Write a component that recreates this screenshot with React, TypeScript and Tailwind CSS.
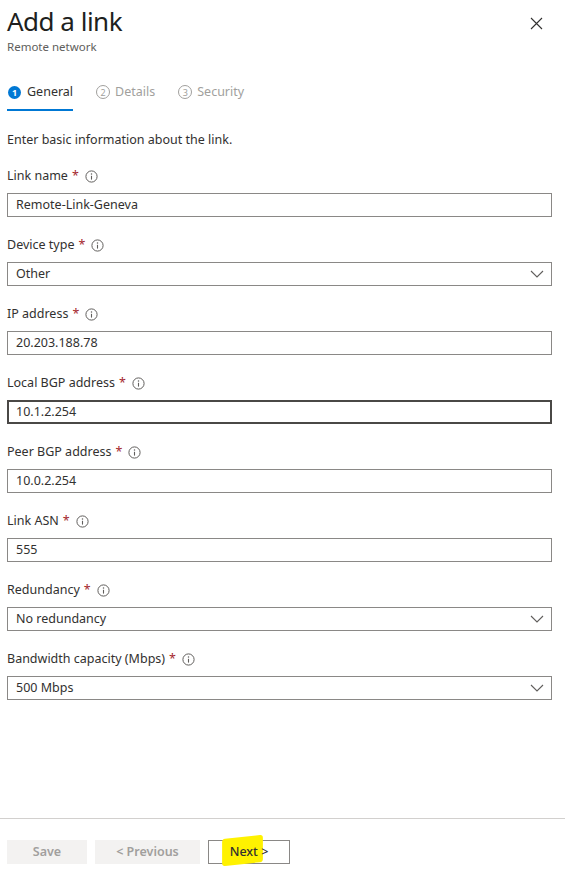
import React from 'react';

const font = { fontFamily: '"Noto Sans", "Open Sans", sans-serif' };

function InfoIcon() {
  return (
    <svg width="13" height="13" viewBox="0 0 13 13" className="ml-[6px]">
      <circle cx="6.5" cy="6.5" r="5.6" fill="none" stroke="#605e5c" strokeWidth="1" />
      <circle cx="6.5" cy="4" r="0.75" fill="#605e5c" />
      <path d="M6.5 5.8 V9.6" stroke="#605e5c" strokeWidth="1.1" />
    </svg>
  );
}

function Chevron() {
  return (
    <svg width="14" height="8" viewBox="0 0 14 8">
      <path d="M1 1 L7 7 L13 1" fill="none" stroke="#605e5c" strokeWidth="1.1" />
    </svg>
  );
}

interface FieldProps {
  label: string;
  value: string;
  select?: boolean;
  focused?: boolean;
}

function Field({ label, value, select, focused }: FieldProps) {
  return (
    <div className="flex flex-col">
      <div className="flex items-center h-[18px] text-[12.5px] leading-[18px] text-[#323130]">
        <span>{label}</span>
        <span className="ml-[4px] text-[#a4262c]">*</span>
        <InfoIcon />
      </div>
      <div
        className={
          'mt-[8px] h-[24px] flex items-center justify-between pr-[7px] text-[12.5px] leading-[18px] text-[#323130] bg-white ' +
          (focused ? 'border-2 border-[#4a4846] pl-[7px]' : 'border border-[#8a8886] pl-[8px]')
        }
      >
        <span>{value}</span>
        {select && <Chevron />}
      </div>
    </div>
  );
}

function StepCircle({ n, active }: { n: number; active?: boolean }) {
  return active ? (
    <span className="w-[13px] h-[13px] rounded-full bg-[#0078d4] text-white text-[9px] font-bold flex items-center justify-center leading-none">
      {n}
    </span>
  ) : (
    <span className="w-[14px] h-[14px] rounded-full border border-[#a19f9d] text-[#a19f9d] text-[9px] flex items-center justify-center leading-none">
      {n}
    </span>
  );
}

export default function App() {
  return (
    <div className="h-[875px] w-[565px] bg-white flex flex-col" style={font}>
      <div className="flex-1 px-[7px]">
        <div className="flex justify-between items-start">
          <div className="pt-[4px]">
            <h1 className="text-[26px] leading-[34px] text-[#201f1e] tracking-[-0.5px]">Add a link</h1>
            <div className="text-[11.5px] leading-[16px] text-[#605e5c] mt-[1px]">Remote network</div>
          </div>
          <button className="mt-[16px] mr-[15px] w-[14px] h-[14px] flex items-center justify-center">
            <svg width="13" height="13" viewBox="0 0 13 13">
              <path d="M1 1 L12 12 M12 1 L1 12" stroke="#323130" strokeWidth="1.1" />
            </svg>
          </button>
        </div>

        <div className="mt-[27px] flex items-end gap-[23px] text-[12.5px]">
          <div className="flex flex-col">
            <div className="flex items-center gap-[6px] h-[20px] pl-[1px]">
              <StepCircle n={1} active />
              <span className="text-[#323130]">General</span>
            </div>
            <div className="mt-[7px] h-[2px] bg-[#0078d4]" />
          </div>
          <div className="flex flex-col">
            <div className="flex items-center gap-[5px] h-[20px]">
              <StepCircle n={2} />
              <span className="text-[#a19f9d]">Details</span>
            </div>
            <div className="mt-[7px] h-[2px]" />
          </div>
          <div className="flex flex-col">
            <div className="flex items-center gap-[5px] h-[20px]">
              <StepCircle n={3} />
              <span className="text-[#a19f9d]">Security</span>
            </div>
            <div className="mt-[7px] h-[2px]" />
          </div>
        </div>

        <div className="mt-[20px] text-[12.5px] leading-[18px] text-[#323130]">
          Enter basic information about the link.
        </div>

        <div className="mt-[18px] mr-[6px] flex flex-col gap-[19px]">
          <Field label="Link name" value="Remote-Link-Geneva" />
          <Field label="Device type" value="Other" select />
          <Field label="IP address" value="20.203.188.78" />
          <Field label="Local BGP address" value="10.1.2.254" focused />
          <Field label="Peer BGP address" value="10.0.2.254" />
          <Field label="Link ASN" value="555" />
          <Field label="Redundancy" value="No redundancy" select />
          <Field label="Bandwidth capacity (Mbps)" value="500 Mbps" select />
        </div>
      </div>

      <div className="border-t border-[#d2d0ce] px-[7px] pt-[21px] pb-[11px] flex gap-[8px] text-[12.5px] font-semibold">
        <button className="w-[80px] h-[24px] bg-[#f3f2f1] text-[#a19f9d]">Save</button>
        <button className="w-[105px] h-[24px] bg-[#f3f2f1] text-[#a19f9d]">&lt; Previous</button>
        <button className="relative w-[82px] h-[24px] bg-white border border-[#8a8886] text-[#323130] font-medium">
          <span className="absolute left-[13px] top-[-4px] w-[41px] h-[27px] bg-[#fff200] rounded-[3px] -rotate-[6deg] skew-x-[-6deg]" />
          <span className="relative">Next &gt;</span>
        </button>
      </div>
    </div>
  );
}
